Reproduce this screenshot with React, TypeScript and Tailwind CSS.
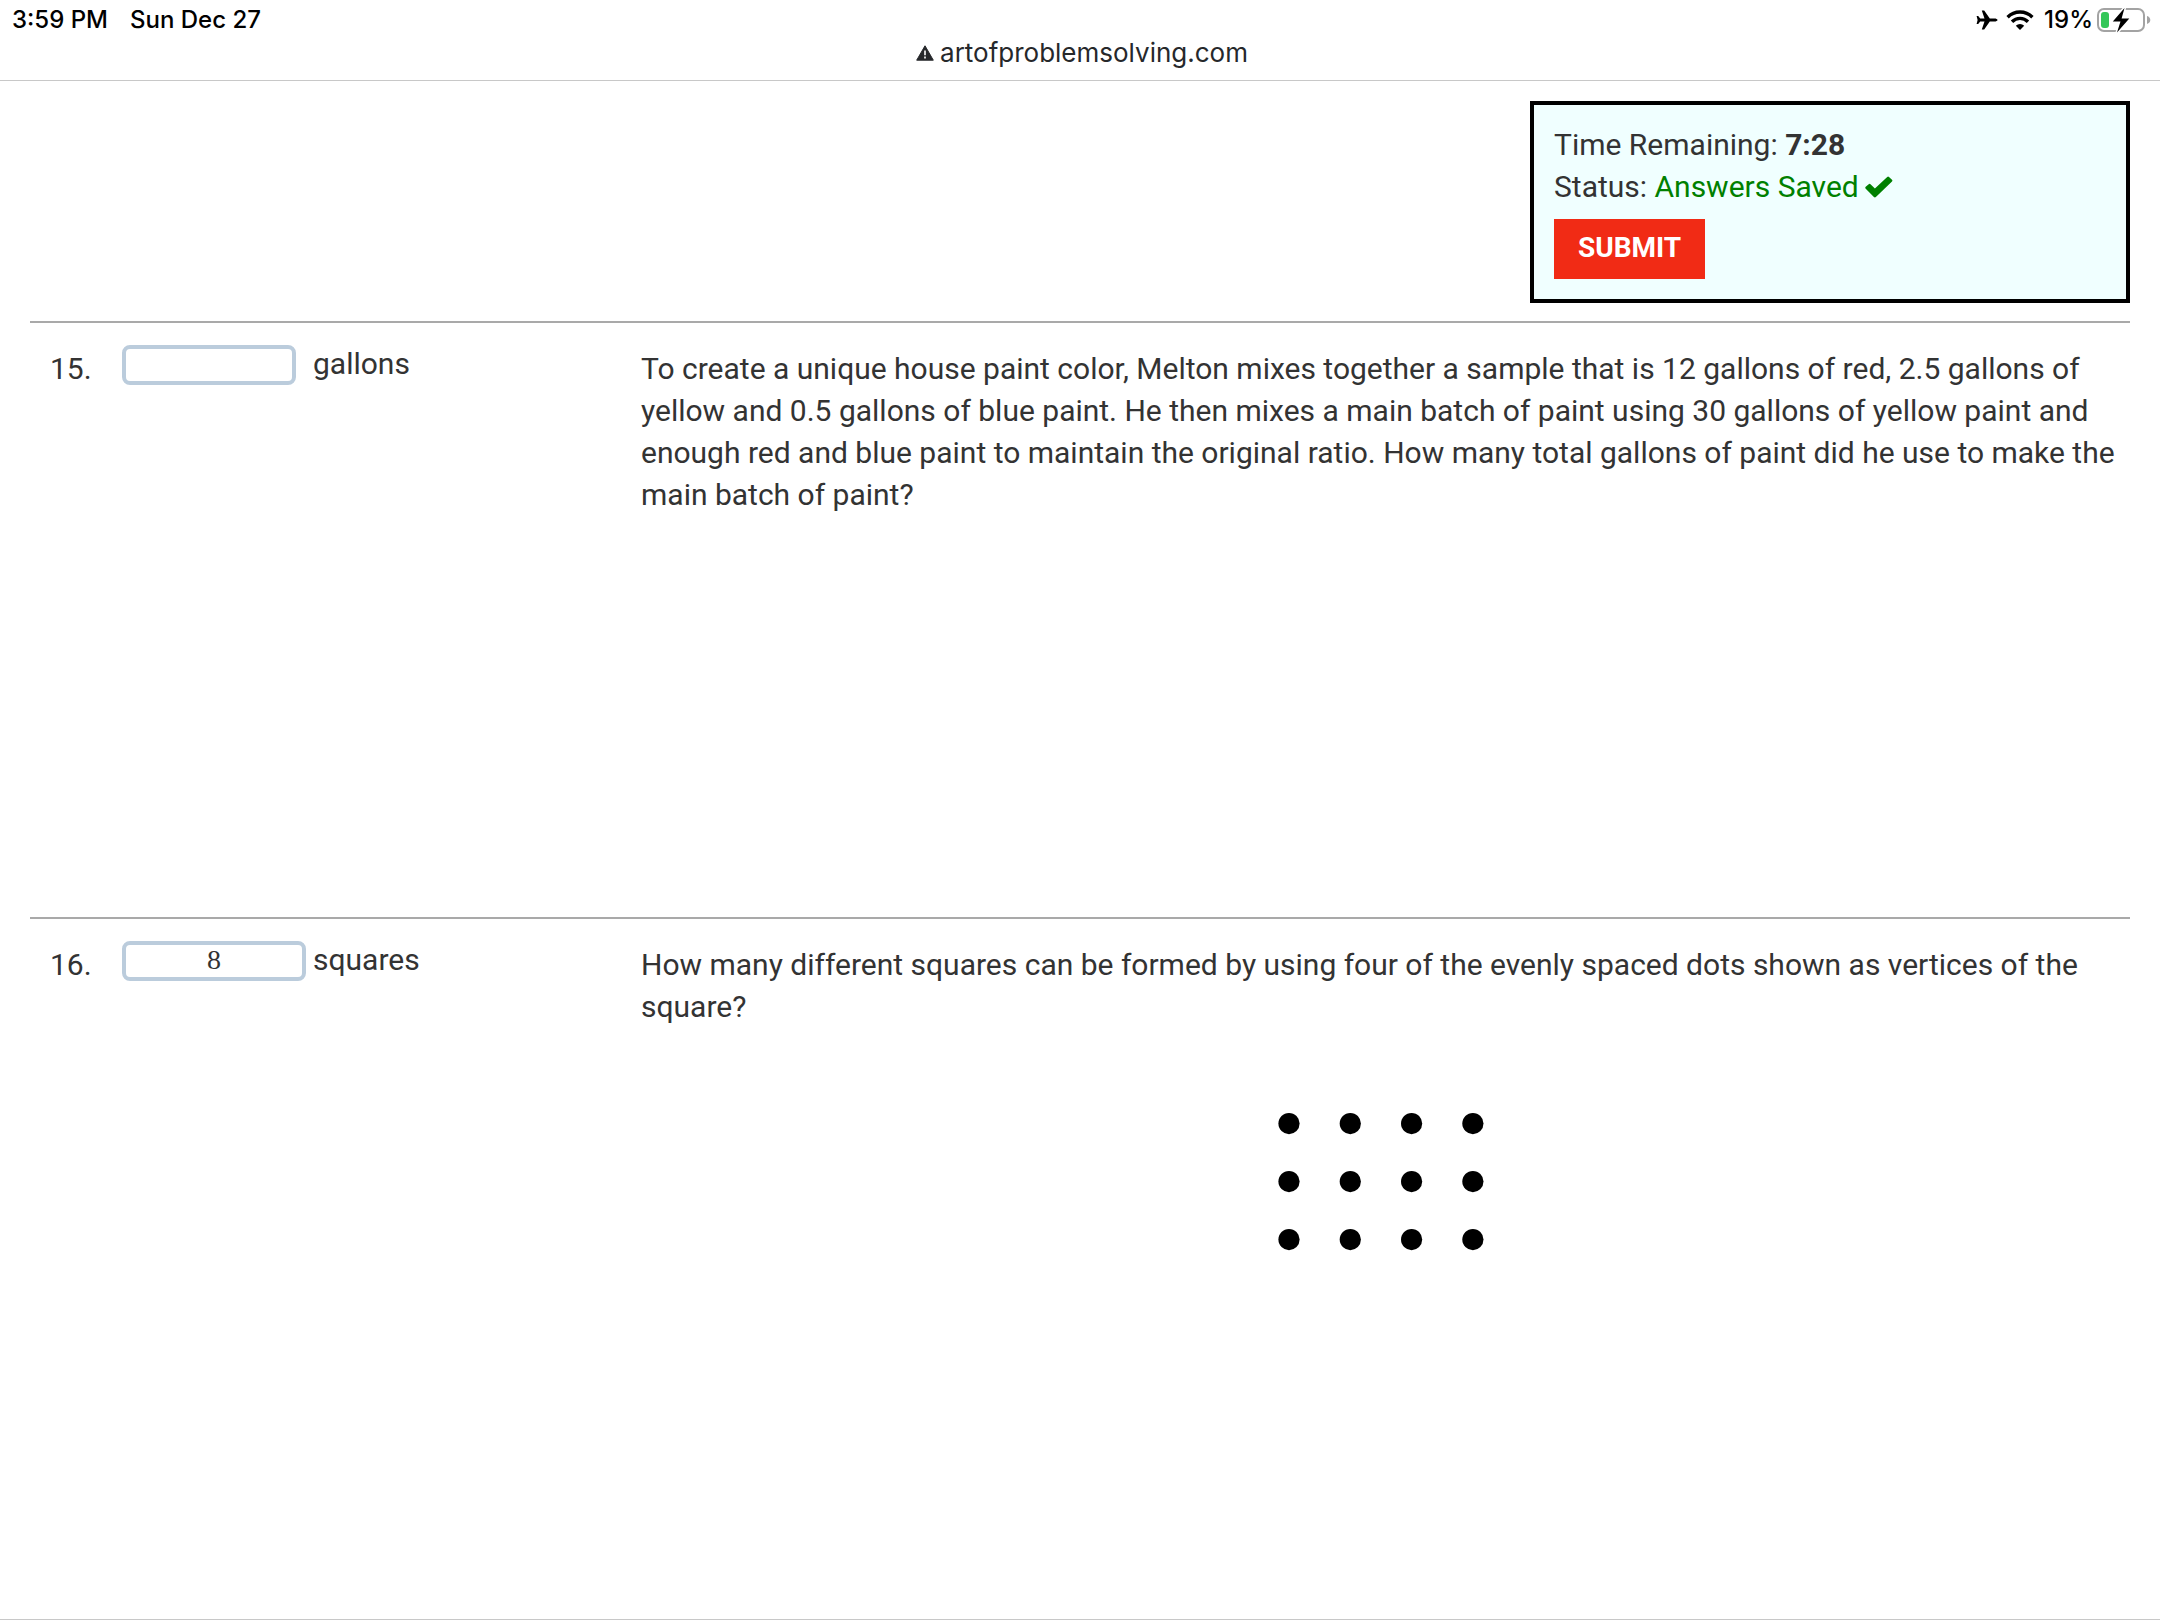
import React from "react";

function Airplane() {
  return (
    <svg viewBox="0 0 22 20" className="h-5 w-[22px]" fill="#000" aria-hidden="true">
      <path d="M21.6 10c0-.9-1.6-1.5-3.2-1.5h-4.600L8.200.600H5.800l2.700 7.900H4.200L2.200 6H.600l1 4-1 4h1.600l2-2.500h4.300L5.800 19.400h2.400l5.600-7.900h4.600c1.600 0 3.200-.6 3.200-1.500z" />
    </svg>
  );
}

function Wifi() {
  return (
    <svg viewBox="0 0 28 20" className="h-5 w-7" fill="none" stroke="#000" strokeWidth="3.400" aria-hidden="true">
      <path d="M1.600 7.200a17.500 17.500 0 0 1 24.800 0" />
      <path d="M6 11.700a11.300 11.300 0 0 1 16 0" />
      <path d="M14 20l-4.200-4.300a6 6 0 0 1 8.400 0z" fill="#000" stroke="none" />
    </svg>
  );
}

function Battery() {
  return (
    <svg viewBox="0 0 54 26" className="h-[26px] w-[54px]" aria-hidden="true">
      <rect x="1" y="2" width="46" height="22" rx="6" fill="none" stroke="#a3a3a3" strokeWidth="2" />
      <path d="M50 9c2 .6 3.300 2.200 3.300 4s-1.300 3.400-3.300 4z" fill="#a3a3a3" />
      <rect x="4" y="5" width="8" height="16" rx="3" fill="#34c759" />
      <path
        d="M27.500 1L15.800 14.400h7.700L20 25.500l12.300-14h-7.700z"
        fill="#000"
        stroke="#fff"
        strokeWidth="3"
        strokeLinejoin="round"
        paintOrder="stroke"
      />
    </svg>
  );
}

function Warning() {
  return (
    <svg viewBox="0 0 18 16" className="h-4 w-[18px]" aria-hidden="true">
      <path d="M9 .8L17.300 15.200H.700z" fill="#26282b" stroke="#26282b" strokeLinejoin="round" />
      <path d="M9 5.500v4.800M9 11.500v2" stroke="#fff" strokeWidth="1.600" />
    </svg>
  );
}

function Check() {
  return (
    <svg viewBox="0 0 28 22" className="h-[22px] w-7" fill="#008000" aria-hidden="true">
      <path d="M.5 12.400Q-.1 11.600.7 10.800L3.700 8.200q.9-.8 1.800 0L9.900 12.400 22.200.9q.9-.9 1.800 0L27 3.700q.8.900 0 1.700L10.900 21q-1 .9-2 0z" />
    </svg>
  );
}

function DotGrid() {
  const dots = [0, 1, 2].flatMap((row) => [0, 1, 2, 3].map((col) => ({ row, col })));
  return (
    <svg viewBox="0 0 206 138" className="h-[138px] w-[206px]" role="img" aria-label="Three rows of four dots">
      {dots.map(({ row, col }) => (
        <circle key={`${row}-${col}`} cx={11 + col * 61.3} cy={10.6 + row * 58} r="10.600" fill="#000" />
      ))}
    </svg>
  );
}

type ProblemProps = {
  id: string;
  number: string;
  unit: string;
  value: string;
  inputClass: string;
  areaClass: string;
  children: React.ReactNode;
};

function Problem({ id, number, unit, value, inputClass, areaClass, children }: ProblemProps) {
  return (
    <section className={`flex border-t-2 border-[#a9a9a9] pr-2.5 pl-5 ${areaClass}`}>
      <div className="w-[72px] shrink-0 pt-[25px]">{number}.</div>
      <div className="flex w-[519px] shrink-0 items-start pt-5">
        <div className="flex h-[42px] w-[191px] items-end">
          <input
            id={id}
            type="text"
            defaultValue={value}
            className={`h-10 rounded-lg border-4 border-[#bbccdc] bg-white pb-0.5 text-center font-['Liberation_Serif',serif] text-[28px] leading-none outline-none ${inputClass}`}
          />
        </div>
        <label htmlFor={id}>{unit}</label>
      </div>
      <div className="min-w-0 flex-1 pt-[25px]">{children}</div>
    </section>
  );
}

export default function App() {
  return (
    <div className="flex min-h-screen flex-col border-b border-[#c8c8c8] bg-white font-[Roboto,sans-serif] text-[30px] leading-[42px] text-[#333]">
      <header className="border-b border-[#c8c8c8] pb-3.5 font-[Inter,sans-serif]">
        <div className="flex h-10 items-center justify-between pr-[9px] pl-3 text-[24px] leading-6 font-medium text-black">
          <div className="flex gap-[22px]">
            <span>3:59 PM</span>
            <span>Sun Dec 27</span>
          </div>
          <div className="flex items-center">
            <Airplane />
            <span className="ml-2 flex"><Wifi /></span>
            <span className="ml-2.5">19%</span>
            <span className="ml-1 flex"><Battery /></span>
          </div>
        </div>
        <div className="flex h-[26px] items-center justify-center gap-1.5 pl-1 text-[26px] leading-[26px] text-[#26282b]">
          <Warning />
          <span>artofproblemsolving.com</span>
        </div>
      </header>
      <main className="px-[30px] pt-5">
        <aside className="mb-[18px] ml-auto w-[600px] border-4 border-black bg-[#f0ffff] px-5 pt-[19px] pb-5">
          <p>
            Time Remaining: <b>7:28</b>
          </p>
          <p className="flex items-center">
            <span className="whitespace-pre">Status: </span>
            <span className="mr-1.5 text-[#008000]">Answers Saved</span>
            <Check />
          </p>
          <button
            type="button"
            className="mt-[11px] block h-[60px] bg-[#f12b15] px-6 pb-0.5 text-[28px] leading-none font-bold text-white"
          >
            SUBMIT
          </button>
        </aside>
        <Problem id="answer-15" number="15" unit="gallons" value="" inputClass="w-[174px]" areaClass="min-h-[596px]">
          <p>
            To create a unique house paint color, Melton mixes together a sample that is 12 gallons of red, 2.5
            gallons of yellow and 0.5 gallons of blue paint. He then mixes a main batch of paint using 30 gallons of
            yellow paint and enough red and blue paint to maintain the original ratio. How many total gallons of paint
            did he use to make the main batch of paint?
          </p>
        </Problem>
        <Problem id="answer-16" number="16" unit="squares" value="8" inputClass="w-[184px]" areaClass="">
          <p>How many different squares can be formed by using four of the evenly spaced dots shown as vertices of the square?</p>
          <div className="mt-[85px] flex justify-center">
            <DotGrid />
          </div>
        </Problem>
      </main>
    </div>
  );
}
